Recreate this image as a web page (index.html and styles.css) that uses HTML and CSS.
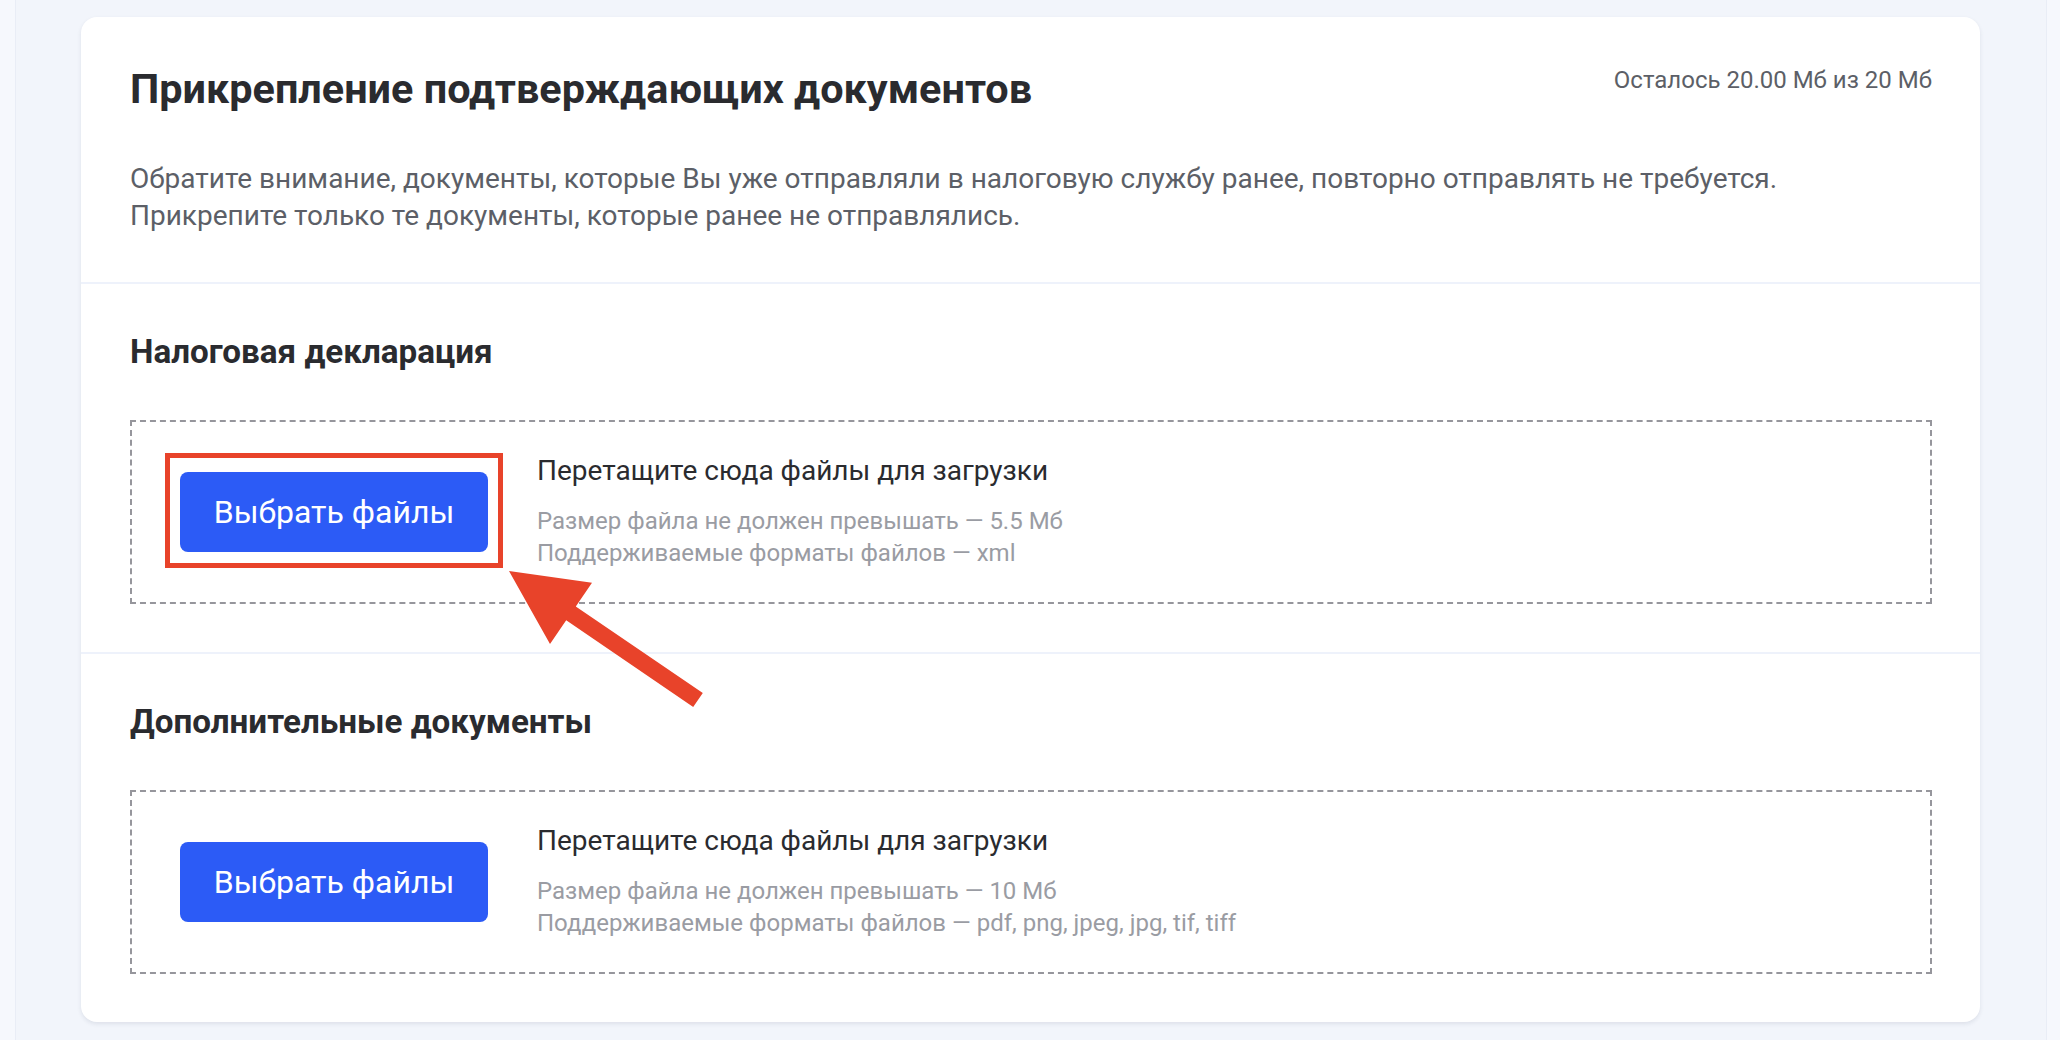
FILE: index.html
```html
<!DOCTYPE html>
<html lang="ru">
<head>
<meta charset="utf-8">
<title>Прикрепление подтверждающих документов</title>
<link rel="stylesheet" href="styles.css">
</head>
<body>
<div class="page">
  <div class="card">
    <header class="card-head">
      <div class="head-row">
        <h1 class="title">Прикрепление подтверждающих документов</h1>
        <div class="quota">Осталось 20.00 Мб из 20 Мб</div>
      </div>
      <p class="note">Обратите внимание, документы, которые Вы уже отправляли в налоговую службу ранее, повторно отправлять не требуется.<br>Прикрепите только те документы, которые ранее не отправлялись.</p>
    </header>
    <section class="section">
      <h2 class="section-title">Налоговая декларация</h2>
      <div class="dropzone">
        <div class="btn-wrap">
          <button class="btn" type="button">Выбрать файлы</button>
          <span class="highlight"></span>
        </div>
        <div class="drop-info">
          <div class="drop-title">Перетащите сюда файлы для загрузки</div>
          <div class="drop-hint">Размер файла не должен превышать — 5.5 Мб</div>
          <div class="drop-hint">Поддерживаемые форматы файлов — xml</div>
        </div>
      </div>
    </section>
    <section class="section">
      <h2 class="section-title">Дополнительные документы</h2>
      <div class="dropzone">
        <div class="btn-wrap">
          <button class="btn" type="button">Выбрать файлы</button>
        </div>
        <div class="drop-info">
          <div class="drop-title">Перетащите сюда файлы для загрузки</div>
          <div class="drop-hint">Размер файла не должен превышать — 10 Мб</div>
          <div class="drop-hint">Поддерживаемые форматы файлов — pdf, png, jpeg, jpg, tif, tiff</div>
        </div>
      </div>
    </section>
  </div>
  <svg class="arrow" width="2060" height="1040" viewBox="0 0 2060 1040" aria-hidden="true">
    <polygon points="509,571 592,582.7 575.8,606.4 702.8,693.1 693.2,707 566.2,620.3 550,644" fill="#e8432a"/>
  </svg>
</div>
</body>
</html>
```
FILE: styles.css
```css
* { box-sizing: border-box; }

html, body {
  margin: 0;
  padding: 0;
}

body {
  background: #f6f8fd;
  font-family: Roboto, "Noto Sans", "Liberation Sans", sans-serif;
  color: #2b2c30;
  width: 2060px;
  height: 1040px;
  overflow: hidden;
}

.page {
  position: relative;
  margin: 0 13px 0 15px;
  height: 1040px;
  padding-top: 17px;
  background: #f2f5fb;
  border-left: 1px solid #e9edf6;
  border-right: 1px solid #e9edf6;
}

.card {
  margin: 0 66px 0 65px;
  background: #ffffff;
  border-radius: 16px;
  box-shadow: 0 2px 4px rgba(40, 50, 80, 0.10);
}

.card-head {
  padding: 48px 48px 48px 49px;
}

.head-row {
  display: flex;
  justify-content: space-between;
  align-items: flex-start;
}

.title {
  margin: 0;
  font-size: 41.4px;
  line-height: 48px;
  font-weight: 700;
  color: #2a2b2f;
}

.quota {
  font-size: 24px;
  line-height: 30px;
  color: #5c5f67;
}

.note {
  margin: 47px 0 0;
  font-size: 28px;
  line-height: 37px;
  color: #5c5f67;
}

.section {
  border-top: 2px solid #eef2fb;
  padding: 46px 48px 48px 49px;
}

.section-title {
  margin: 0 0 46px;
  font-size: 33.2px;
  line-height: 44px;
  font-weight: 700;
  color: #2a2b2f;
}

.dropzone {
  display: flex;
  align-items: center;
  gap: 49px;
  padding: 33px 48px;
  border: 2px dashed #96969c;
}

.btn-wrap {
  position: relative;
  flex: none;
}

.btn {
  display: block;
  width: 308px;
  height: 80px;
  border: none;
  border-radius: 8px;
  background: #2c5bf6;
  color: #ffffff;
  font-family: Roboto, "Noto Sans", "Liberation Sans", sans-serif;
  font-size: 32px;
  font-weight: 400;
  padding: 0;
}

.highlight {
  position: absolute;
  top: -19px;
  left: -15px;
  right: -15px;
  bottom: -16px;
  border: 5px solid #e8432a;
}

.drop-info {
  display: flex;
  flex-direction: column;
}

.drop-title {
  font-size: 28px;
  line-height: 32px;
  color: #2a2b2f;
  margin-bottom: 18px;
}

.drop-hint {
  font-size: 24px;
  line-height: 32px;
  color: #9a9ca3;
}

.arrow {
  position: absolute;
  left: -16px;
  top: 0;
  pointer-events: none;
}
```
